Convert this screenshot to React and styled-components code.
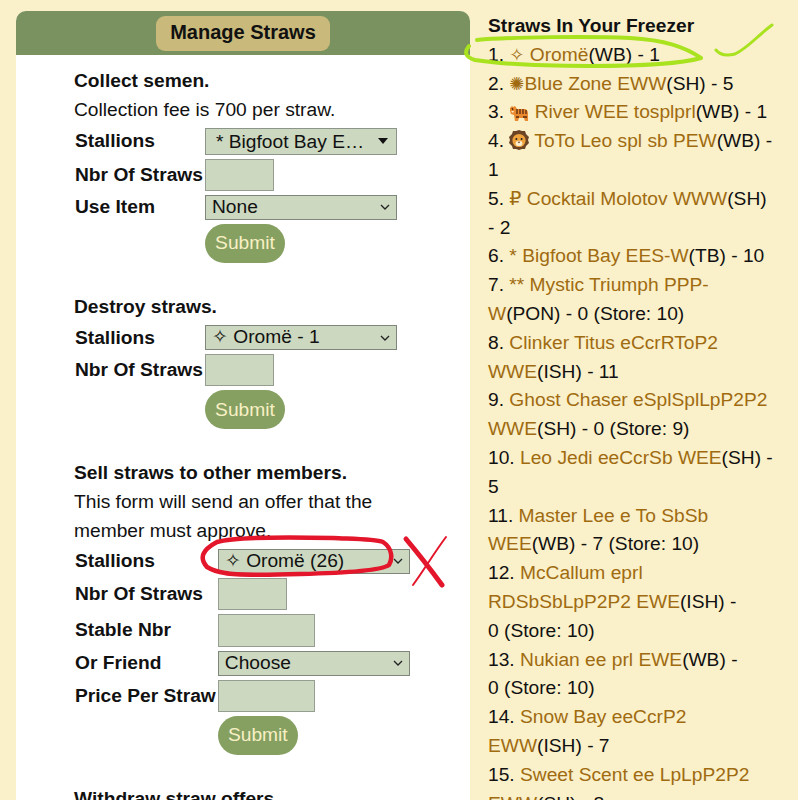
import styled, { createGlobalStyle } from 'styled-components';

const GlobalStyle = createGlobalStyle`
  html, body {
    margin: 0;
    height: 800px;
    overflow: hidden;
    background: #faf0c9;
  }
  body {
    font-family: "Liberation Sans", Arial, sans-serif;
    font-size: 19.2px;
    line-height: 28.8px;
    color: #111;
  }
`;

const Page = styled.div`
  position: relative;
  width: 798px;
  height: 800px;
  overflow: hidden;
  display: flex;
  align-items: flex-start;
  gap: 18px;
  padding: 11px 0 0 16px;
  box-sizing: border-box;
`;

const Panel = styled.section`
  width: 454px;
  flex: none;
  background: #fff;
  border-radius: 10px 10px 0 0;
  min-height: 900px;
`;

const PanelHeader = styled.header`
  height: 44px;
  background: #7a925f;
  border-radius: 10px 10px 0 0;
  display: flex;
  justify-content: center;
  align-items: center;
`;

const PanelTitle = styled.h2`
  margin: 0;
  width: 174px;
  height: 35px;
  border-radius: 9px;
  background: #c9b97a;
  font-size: 20px;
  font-weight: bold;
  line-height: 33px;
  text-align: center;
`;

const PanelBody = styled.div`
  padding: 12px 0 0 58px;
`;

const FormBlock = styled.form`
  margin-bottom: 27px;
`;

const BlockTitle = styled.div`
  font-weight: bold;
`;

const BlockText = styled.div`
  width: 330px;
`;

const FormTable = styled.table`
  margin: ${(p) => p.$top || 0}px 0 0 -2px;
  border-spacing: 2px;
  border-collapse: separate;
  font-size: 19.2px;
  line-height: 22px;
`;

const Label = styled.td`
  padding: 1px 0 1px 1px;
  font-weight: bold;
  white-space: nowrap;
`;

const Control = styled.td`
  padding: 1px 0;
`;

const Field = styled.input`
  display: block;
  box-sizing: border-box;
  width: ${(p) => p.$width}px;
  height: ${(p) => p.$height || 32}px;
  background: #ccd8c0;
  border: 1px solid #969e92;
  padding: 0 4px;
  margin: 0;
`;

const chevron =
  "url(\"data:image/svg+xml,%3Csvg xmlns='http://www.w3.org/2000/svg' width='10' height='6'%3E%3Cpath d='M1 1l4 4 4-4' fill='none' stroke='%23222' stroke-width='1.3'/%3E%3C/svg%3E\")";

const Dropdown = styled.select`
  display: block;
  box-sizing: border-box;
  width: 192px;
  height: 25px;
  appearance: none;
  background: #ccd8c0 ${chevron} no-repeat right 6px center;
  border: 1px solid #7f877c;
  padding: 0 20px 2px 6px;
  font-family: "Liberation Sans", Arial, sans-serif;
  font-size: 19.2px;
  color: #111;
  margin: 0;
  border-radius: 0;
`;

const FakeSelect = styled.div`
  box-sizing: border-box;
  width: 192px;
  height: 27px;
  background: #ccd8c0;
  border: 1px solid #8d958a;
  display: flex;
  align-items: center;
  padding: 0 8px 0 10px;
  line-height: 25px;
`;

const FakeValue = styled.span`
  flex: 1;
  min-width: 0;
  overflow: hidden;
  white-space: nowrap;
`;

const Caret = styled.span`
  width: 0;
  height: 0;
  border-left: 5px solid transparent;
  border-right: 5px solid transparent;
  border-top: 6px solid #111;
`;

const SubmitButton = styled.button`
  display: block;
  width: 80px;
  height: 39px;
  border: 0;
  border-radius: 20px;
  background: #86a062;
  color: #f8f0c4;
  font-family: "Liberation Sans", Arial, sans-serif;
  font-size: 19.2px;
  padding: 0;
  margin: 0;
`;

const Sidebar = styled.aside`
  width: 287px;
  flex: none;
  margin-top: 1px;
`;

const SidebarTitle = styled.div`
  font-weight: bold;
`;

const StrawLink = styled.a`
  color: #a06b10;
  text-decoration: none;
`;

const StrawCount = styled.span`
  white-space: nowrap;
`;

const SymbolGlyph = styled.span`
  font-family: "DejaVu Sans", sans-serif;
  font-size: ${(p) => p.$size}px;
  line-height: 0;
`;

const InlineIcon = styled.svg`
  vertical-align: 1px;
  margin: -4px 0;
`;

const Annotations = styled.svg`
  position: absolute;
  left: 0;
  top: 0;
  pointer-events: none;
`;

const TigerIcon = () => (
  <InlineIcon width="20" height="16" viewBox="0 0 20 16">
    <path d="M1 3l2-2 1 1 2-1 2 3h7c3 0 4 2 4 5v7h-3l-1-3h-5l-1 3H6l-1-6-3-1-1-3z" fill="#ea8a2e" />
    <path d="M2 6h3l-1 2z" fill="#fbe6c8" />
    <path d="M8 4v5M11 4v5M14 4v5M17 5v4M7 12h3M14 12h4M3 3l1 2" stroke="#5a2a0e" strokeWidth="1.3" fill="none" />
  </InlineIcon>
);

const LionIcon = () => (
  <InlineIcon width="20" height="20" viewBox="0 0 20 20">
    <path
      d="M10 0l3 1 3 0 1 3 3 3-1 3 1 3-3 3-1 3-3 0-3 1-3-1-3 0-1-3-3-3 1-3-1-3 3-3 1-3 3 0z"
      fill="#6b4426"
    />
    <circle cx="10" cy="10.5" r="6.6" fill="#eda23c" />
    <circle cx="7.4" cy="9" r="1" fill="#222" />
    <circle cx="12.6" cy="9" r="1" fill="#222" />
    <ellipse cx="10" cy="13.4" rx="3.4" ry="2.6" fill="#fdeed0" />
    <path d="M8.7 11.8h2.6L10 13.3z" fill="#4a2412" />
  </InlineIcon>
);

const straws = [
  { pre: <><SymbolGlyph $size={18}>✧</SymbolGlyph> </>, name: 'Oromë', tag: '(WB) - ', count: '1' },
  { pre: <SymbolGlyph $size={18}>✺</SymbolGlyph>, name: 'Blue Zone EWW', tag: '(SH) - ', count: '5' },
  { pre: <><TigerIcon /> </>, name: 'River WEE tosplprl', tag: '(WB) - ', count: '1' },
  { pre: <><LionIcon /> </>, name: 'ToTo Leo spl sb PEW', tag: '(WB) - ', count: '1' },
  { pre: <><SymbolGlyph $size={19}>₽</SymbolGlyph> </>, name: 'Cocktail Molotov WWW', tag: '(SH) - ', count: '2' },
  { name: '* Bigfoot Bay EES-W', tag: '(TB) - ', count: '10' },
  { name: '** Mystic Triumph PPP-W', tag: '(PON) - ', count: '0 (Store: 10)' },
  { name: 'Clinker Titus eCcrRToP2 WWE', tag: '(ISH) - ', count: '11' },
  { name: 'Ghost Chaser eSplSplLpP2P2 WWE', tag: '(SH) - ', count: '0 (Store: 9)' },
  { name: 'Leo Jedi eeCcrSb WEE', tag: '(SH) - ', count: '5' },
  { name: 'Master Lee e To SbSb WEE', tag: '(WB) - ', count: '7 (Store: 10)' },
  { name: 'McCallum eprl RDSbSbLpP2P2 EWE', tag: '(ISH) - ', count: '0 (Store: 10)' },
  { name: 'Nukian ee prl EWE', tag: '(WB) - ', count: '0 (Store: 10)' },
  { name: 'Snow Bay eeCcrP2 EWW', tag: '(ISH) - ', count: '7' },
  { name: 'Sweet Scent ee LpLpP2P2 EWW', tag: '(SH) - ', count: '8' },
];

const App = () => (
  <Page>
    <GlobalStyle />
    <Panel>
      <PanelHeader>
        <PanelTitle>Manage Straws</PanelTitle>
      </PanelHeader>
      <PanelBody>
        <FormBlock>
          <BlockTitle>Collect semen.</BlockTitle>
          <BlockText>Collection fee is 700 per straw.</BlockText>
          <FormTable>
            <tbody>
              <tr>
                <Label>Stallions</Label>
                <Control>
                  <FakeSelect>
                    <FakeValue>* Bigfoot Bay E…</FakeValue>
                    <Caret />
                  </FakeSelect>
                </Control>
              </tr>
              <tr>
                <Label>Nbr Of Straws</Label>
                <Control><Field $width={69} /></Control>
              </tr>
              <tr>
                <Label>Use Item</Label>
                <Control>
                  <Dropdown><option>None</option></Dropdown>
                </Control>
              </tr>
              <tr>
                <td />
                <Control><SubmitButton type="button">Submit</SubmitButton></Control>
              </tr>
            </tbody>
          </FormTable>
        </FormBlock>
        <FormBlock>
          <BlockTitle>Destroy straws.</BlockTitle>
          <FormTable $top={1}>
            <tbody>
              <tr>
                <Label>Stallions</Label>
                <Control>
                  <Dropdown><option>✧ Oromë - 1</option></Dropdown>
                </Control>
              </tr>
              <tr>
                <Label>Nbr Of Straws</Label>
                <Control><Field $width={69} /></Control>
              </tr>
              <tr>
                <td />
                <Control><SubmitButton type="button">Submit</SubmitButton></Control>
              </tr>
            </tbody>
          </FormTable>
        </FormBlock>
        <FormBlock>
          <BlockTitle>Sell straws to other members.</BlockTitle>
          <BlockText>This form will send an offer that the member must approve.</BlockText>
          <FormTable>
            <tbody>
              <tr>
                <Label>Stallions</Label>
                <Control>
                  <Dropdown><option>✧ Oromë (26)</option></Dropdown>
                </Control>
              </tr>
              <tr>
                <Label>Nbr Of Straws</Label>
                <Control><Field $width={69} /></Control>
              </tr>
              <tr>
                <Label>Stable Nbr</Label>
                <Control><Field $width={97} $height={33} /></Control>
              </tr>
              <tr>
                <Label>Or Friend</Label>
                <Control>
                  <Dropdown><option>Choose</option></Dropdown>
                </Control>
              </tr>
              <tr>
                <Label>Price Per Straw</Label>
                <Control><Field $width={97} /></Control>
              </tr>
              <tr>
                <td />
                <Control><SubmitButton type="button">Submit</SubmitButton></Control>
              </tr>
            </tbody>
          </FormTable>
        </FormBlock>
        <BlockTitle>Withdraw straw offers</BlockTitle>
      </PanelBody>
    </Panel>
    <Sidebar>
      <SidebarTitle>Straws In Your Freezer</SidebarTitle>
      {straws.map((s, i) => (
        <div key={s.name}>
          {i + 1}.{' '}
          <StrawLink>{s.pre}{s.name}</StrawLink>
          {s.tag}
          <StrawCount>{s.count}</StrawCount>
        </div>
      ))}
    </Sidebar>
    <Annotations width="798" height="800" viewBox="0 0 798 800" fill="none" strokeLinecap="round" strokeLinejoin="round">
      <path
        d="M477 40C510 37 590 36 630 38C665 40 685 47 701 58C680 64 640 66 590 66C550 66 500 64 475 60C465 57 464 52 469 46"
        stroke="#a9e21e"
        strokeWidth="4"
      />
      <path d="M716 50C720 55 727 56 735 54C748 48 757 36 772 25" stroke="#a9e21e" strokeWidth="3" />
      <path
        d="M207 567C199 558 202 550 217 542C235 537 290 537 333 538C355 539 375 539 383 542C392 548 393 558 389 565C380 571 345 573 300 574C265 575 235 575 225 573C218 572 212 570 207 567"
        stroke="#e3162c"
        strokeWidth="4.5"
      />
      <path d="M406 539C417 552 431 570 442 585" stroke="#e3162c" strokeWidth="5" />
      <path d="M446 537C434 553 424 570 413 585" stroke="#e3162c" strokeWidth="2" />
    </Annotations>
  </Page>
);

export default App;
